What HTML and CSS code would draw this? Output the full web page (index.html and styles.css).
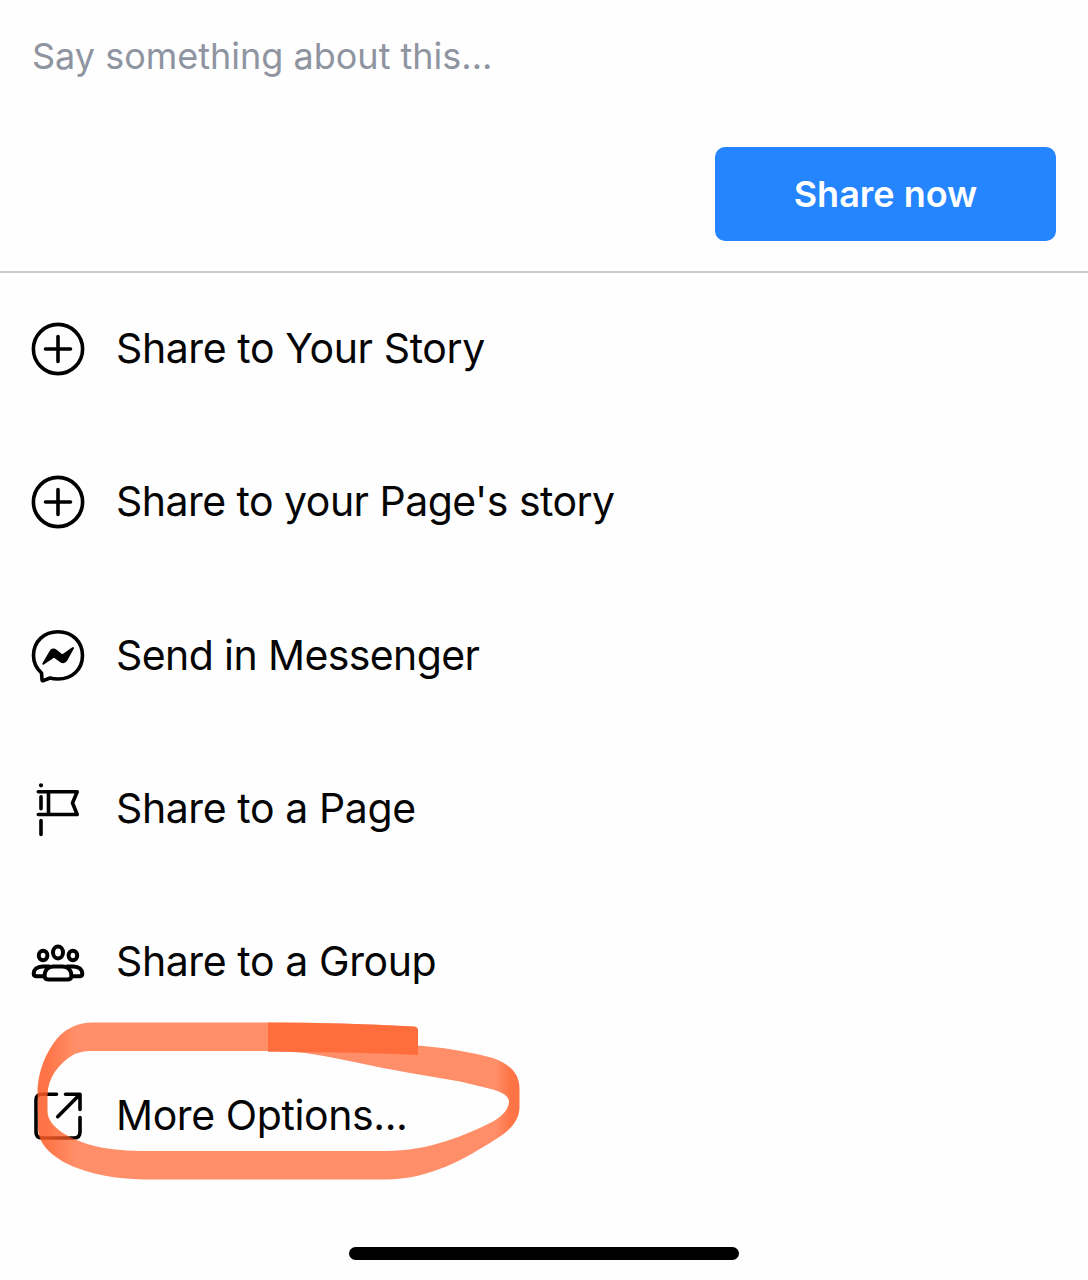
FILE: index.html
```html
<!DOCTYPE html>
<html lang="en">
<head>
	<meta charset="UTF-8">
	<title>Share</title>
	<link rel="stylesheet" href="styles.css">
</head>
<body>

<main class="share-sheet">
	<section class="composer">
		<p class="placeholder">Say something about this...</p>
		<button class="share-now" type="button">Share now</button>
	</section>

	<ul class="options">
		<li class="option">
			<svg class="icon" viewBox="0 0 60 60">
				<circle cx="30" cy="30" r="24.6"/>
				<path d="M30 17.5v25M17.5 30h25"/>
			</svg>
			<span class="label">Share to Your Story</span>
		</li>
		<li class="option">
			<svg class="icon" viewBox="0 0 60 60">
				<circle cx="30" cy="30" r="24.6"/>
				<path d="M30 17.5v25M17.5 30h25"/>
			</svg>
			<span class="label page-story">Share to your Page's story</span>
		</li>
		<li class="option">
			<svg class="icon" viewBox="0 0 60 60">
				<path d="M13.5 47C8.5 42.5 5.500 36.500 5.500 29.500C5.500 15.500 16 5.700 30 5.700S54.500 15.500 54.500 29.500S44 53 30 53C27 53 24.500 52.700 22 52L15.400 54.700C14.500 55 14 54.500 14 53.700Z"/>
				<path class="solid" d="M15.300 37.700L22.300 25.700C23.700 23.200 26 23 28 24.500L33 28.600C33.800 29.200 34.500 29.200 35.300 28.700L45 22L38.700 33.500C37 36.500 34.800 37 32.500 35.200L27 31.200Q26 30.500 25 31.200Z"/>
			</svg>
			<span class="label messenger">Send in Messenger</span>
		</li>
		<li class="option">
			<svg class="icon" viewBox="0 0 60 60">
				<path d="M13 17.700v12M13 41.500v14"/>
				<circle class="solid" cx="13" cy="6.300" r="1.100"/>
				<path d="M10.300 12.700H49.200L44.500 24L49.200 35.500H10.300M20.500 12.700v22.800"/>
			</svg>
			<span class="label">Share to a Page</span>
		</li>
		<li class="option">
			<svg class="icon people" viewBox="0 0 60 60">
				<ellipse cx="30" cy="20.500" rx="5" ry="6"/>
				<ellipse cx="15.100" cy="23.500" rx="4.300" ry="4.700"/>
				<ellipse cx="44.900" cy="23.500" rx="4.300" ry="4.700"/>
				<path d="M16.600 44C16.600 38 20.500 34.400 25.500 34.400H34.500C39.500 34.400 43.400 38 43.400 44C43.400 46.300 42.200 47.400 40 47.400H20C17.800 47.400 16.600 46.300 16.600 44Z"/>
				<path d="M21 34.400H14.500C9 34.400 5.700 37.700 5.700 41.500C5.700 43.500 6.700 44.300 8.500 44.300H16M39 34.400H45.500C51 34.400 54.300 37.700 54.300 41.500C54.300 43.500 53.300 44.300 51.500 44.300H44"/>
			</svg>
			<span class="label">Share to a Group</span>
		</li>
		<li class="option">
			<svg class="icon" viewBox="0 0 60 60">
				<path d="M28.500 8.300H14Q8 8.300 8 14.300V46Q8 52 14 52H46Q52 52 52 46V31.500"/>
				<path d="M37.500 8.300H52V23.500M51.500 8.800L29.700 30.700"/>
			</svg>
			<span class="label">More Options...</span>
		</li>
	</ul>

	<!-- highlighter loop around the last option -->
	<svg class="marker" viewBox="30 1015 500 172">
		<defs>
			<linearGradient id="ink" gradientUnits="userSpaceOnUse" x1="37" y1="0" x2="520" y2="0">
				<stop offset="0" stop-color="#ff5a23" stop-opacity=".84"/>
				<stop offset=".02" stop-color="#ff5a23" stop-opacity=".84"/>
				<stop offset=".08" stop-color="#ff5a23" stop-opacity=".68"/>
				<stop offset=".95" stop-color="#ff5a23" stop-opacity=".68"/>
				<stop offset=".98" stop-color="#ff5a23" stop-opacity=".84"/>
			</linearGradient>
		</defs>
		<path fill="url(#ink)" fill-rule="evenodd" d="M268 1022.500H93C77 1022.500 63 1029 53 1044C42 1060 37.500 1078 37.500 1092L38 1128C38 1146 56 1160 77 1168C100 1177 125 1179.500 155 1179.500H385C430 1179.500 466 1158 493 1141C508 1132 519.500 1122 519.500 1107V1088C519.500 1074 510 1064 493 1058Q460 1049 418 1045.500V1030Q418 1027 414 1026.500Q340 1022.500 268 1022.500Z
			M268 1051H93C84 1051 78 1052.500 73 1055C58 1064 48 1078 47.500 1095V1111C47.500 1120 54 1127 63 1133C84 1146 110 1151 147 1151H385C430 1151 466 1135 493 1121.500Q509 1112 509 1101Q508 1094 493 1089.500L460 1081.500L410 1073C370 1066 340 1058 305 1053Q290 1051 268 1051Z"/>
		<path class="overlap" d="M268 1022.500Q340 1022.500 414 1026.500Q418 1027 418 1030V1055Q350 1051.500 268 1052Z"/>
	</svg>

	<div class="home-indicator"></div>
</main>

</body>
</html>
```
FILE: styles.css
```css
:root {
	--color-text: #050505;
	--color-placeholder: #8f94a1;
	--color-primary: #2485ff;
	--color-divider: #c9cccd;
	font-family: Inter, "Liberation Sans", sans-serif;
}
body {
	margin: 0;
	background-color: #fefefe;
	color: var(--color-text);
}
.share-sheet {
	position: relative;
	box-sizing: border-box;
	width: 1088px;
	height: 1280px;
	overflow: hidden;
}

.composer {
	display: flex;
	flex-direction: column;
	box-sizing: border-box;
	height: 273px;
	padding: 32px 32px 30px;
	border-bottom: 2px solid var(--color-divider);
}
.placeholder {
	margin: 0;
	color: var(--color-placeholder);
	font-size: 36px;
	line-height: 48px;
}
.share-now {
	align-self: flex-end;
	width: 341px;
	height: 94px;
	margin-top: auto;
	padding: 0;
	border: 0;
	border-radius: 10px;
	background-color: var(--color-primary);
	color: #fff;
	font-family: inherit;
	font-size: 36px;
	font-weight: 600;
}

.options {
	margin: -0.8px 0 0;
	padding: 0;
	list-style: none;
}
.option {
	display: flex;
	align-items: center;
	gap: 28px;
	height: 153.4px;
	padding-left: 28px;
}
.icon {
	width: 60px;
	height: 60px;
	fill: none;
	stroke: #000;
	stroke-width: 3.6;
	stroke-linecap: round;
	stroke-linejoin: round;
}
.icon .solid {
	fill: #000;
	stroke-width: 2;
}
.people {
	stroke-width: 4;
}
.label {
	padding-bottom: 2px;
	font-size: 41px;
	line-height: 52px;
	letter-spacing: -0.4px;
	white-space: nowrap;
}
.page-story {
	letter-spacing: -0.53px;
}
.messenger {
	letter-spacing: -0.6px;
}

.marker {
	position: absolute;
	left: 30px;
	top: 1015px;
	width: 500px;
	height: 172px;
}
.overlap {
	fill: #ff5a23;
	fill-opacity: 0.64;
}

.home-indicator {
	width: 390px;
	height: 13px;
	margin: 54.6px auto 0;
	border-radius: 7px;
	background-color: #000;
}
```
